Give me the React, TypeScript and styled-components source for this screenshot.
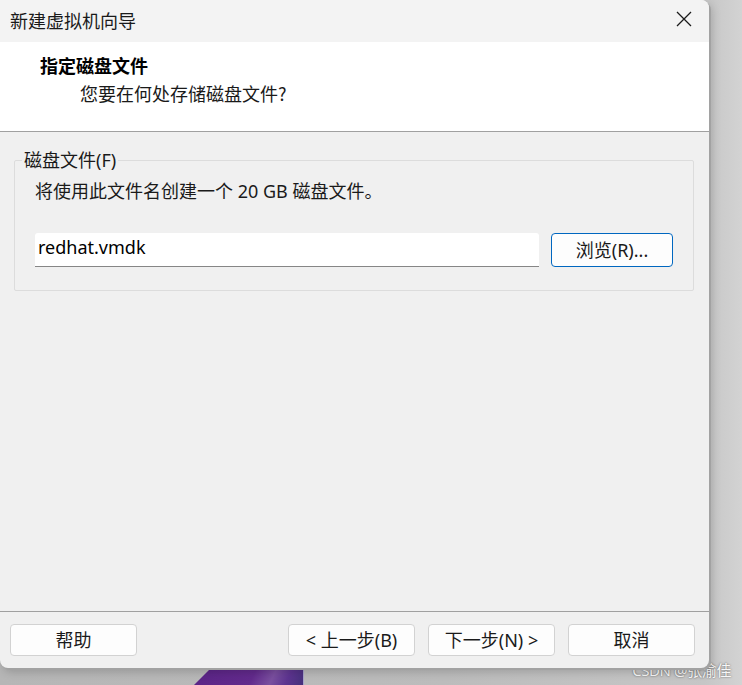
import React from "react";
import styled, { createGlobalStyle } from "styled-components";

const GlobalStyle = createGlobalStyle`
  html, body {
    margin: 0;
    padding: 0;
  }
  body {
    font-family: "Noto Sans", "Noto Sans CJK SC", sans-serif;
    background: #c2c2c2;
  }
`;

const Desktop = styled.div`
  position: relative;
  width: 742px;
  height: 685px;
  overflow: hidden;
  background: linear-gradient(90deg, #b6b6b6 0%, #bcbcbc 60%, #c6c6c6 95%, #d3d3d3 100%);
`;

const Wallpaper = styled.div`
  position: absolute;
  left: 194px;
  top: 660px;
  width: 109px;
  height: 25px;
  background: linear-gradient(115deg, #5a2486 0%, #622a8c 55%, #7a4f9f 72%, #5d3490 85%, #44307a 100%);
  border-right: 1px solid #a7a3c8;
  clip-path: polygon(25px 0, 100% 0, 100% 100%, 0 100%);
`;

const Watermark = styled.div`
  position: absolute;
  right: 11px;
  bottom: 5px;
  font-family: "Noto Sans", "Noto Sans CJK SC", sans-serif;
  font-size: 15px;
  color: rgba(255, 255, 255, 0.95);
  text-shadow: 0 0 2px rgba(70, 70, 70, 0.9);
  letter-spacing: -0.4px;
`;

const Window = styled.div`
  position: relative;
  z-index: 1;
  width: 709px;
  height: 668px;
  display: flex;
  flex-direction: column;
  background: #f0f0f0;
  border-radius: 0 8px 8px 8px;
  overflow: hidden;
  box-shadow: 2px 2px 0 #a2a2a2, 3px 4px 10px rgba(0, 0, 0, 0.18);
`;

const TitleBar = styled.div`
  height: 42px;
  flex: none;
  display: flex;
  align-items: center;
  justify-content: space-between;
  padding: 0 16px 0 10px;
  background: #f3f3f3;
`;

const TitleText = styled.span`
  font-family: "Noto Sans CJK SC", sans-serif;
  font-size: 18px;
  color: #1a1a1a;
  line-height: 1;
  margin-top: -3px;
`;

const CloseButton = styled.div`
  width: 18px;
  height: 18px;
  display: flex;
  align-items: center;
  justify-content: center;
  margin-top: -4px;
`;

const Header = styled.div`
  height: 90px;
  flex: none;
  background: #ffffff;
  border-bottom: 1px solid #a0a0a0;
  padding: 11px 0 0 40px;
  box-sizing: border-box;
`;

const HeaderTitle = styled.div`
  font-family: "Noto Sans CJK SC", sans-serif;
  font-size: 18px;
  font-weight: 700;
  color: #000;
  line-height: 24px;
`;

const HeaderSub = styled.div`
  font-family: "Noto Sans CJK SC", sans-serif;
  font-size: 18px;
  color: #1a1a1a;
  line-height: 24px;
  margin: 4px 0 0 40px;
`;

const Body = styled.div`
  flex: 1;
  padding: 17px 15px 0 14px;
`;

const GroupBox = styled.fieldset`
  margin: 0;
  padding: 8px 20px 23px 20px;
  border: 1px solid #dcdcdc;
  border-radius: 2px;
`;

const GroupLegend = styled.legend`
  margin-left: -13px;
  padding: 0 2px;
  font-size: 18px;
  line-height: 22px;
  color: #1a1a1a;
`;

const Description = styled.div`
  font-size: 18px;
  line-height: 24px;
  color: #1a1a1a;
`;

const FileRow = styled.div`
  display: flex;
  gap: 12px;
  margin-top: 30px;
`;

const PathField = styled.div`
  flex: 1;
  height: 34px;
  box-sizing: border-box;
  padding: 2px 3px 0;
  background: #ffffff;
  border-bottom: 1px solid #868686;
  border-radius: 3px 3px 0 0;
  font-size: 18px;
  line-height: 24px;
  color: #000;
`;

const Button = styled.div<{ $primary?: boolean }>`
  width: 127px;
  height: 32px;
  box-sizing: border-box;
  display: flex;
  align-items: center;
  justify-content: center;
  background: #fdfdfd;
  border: 1px solid ${(p) => (p.$primary ? "#0067c0" : "#d2d2d2")};
  border-radius: 4px;
  font-size: 18px;
  color: #1a1a1a;
  line-height: 1;
`;

const BrowseButton = styled(Button)`
  width: 122px;
  height: 34px;
`;

const Footer = styled.div`
  flex: none;
  display: flex;
  align-items: center;
  height: 57px;
  box-sizing: border-box;
  padding: 0 14px 0 10px;
  border-top: 1px solid #a0a0a0;
`;

const Spacer = styled.div`
  flex: 1;
`;

const NavGroup = styled.div`
  display: flex;
  gap: 13px;
`;

export default function App() {
  return (
    <>
      <GlobalStyle />
      <Desktop>
        <Wallpaper />
        <Window>
          <TitleBar>
            <TitleText>新建虚拟机向导</TitleText>
            <CloseButton>
              <svg width="16" height="16" viewBox="0 0 16 16">
                <path d="M1 1 L15 15 M15 1 L1 15" stroke="#1a1a1a" strokeWidth="1.3" fill="none" />
              </svg>
            </CloseButton>
          </TitleBar>
          <Header>
            <HeaderTitle>指定磁盘文件</HeaderTitle>
            <HeaderSub>您要在何处存储磁盘文件?</HeaderSub>
          </Header>
          <Body>
            <GroupBox>
              <GroupLegend>磁盘文件(F)</GroupLegend>
              <Description>将使用此文件名创建一个 20 GB 磁盘文件。</Description>
              <FileRow>
                <PathField>redhat.vmdk</PathField>
                <BrowseButton $primary>浏览(R)...</BrowseButton>
              </FileRow>
            </GroupBox>
          </Body>
          <Footer>
            <Button>帮助</Button>
            <Spacer />
            <NavGroup>
              <Button>&lt; 上一步(B)</Button>
              <Button>下一步(N) &gt;</Button>
              <Button>取消</Button>
            </NavGroup>
          </Footer>
        </Window>
        <Watermark>CSDN @张渝佳</Watermark>
      </Desktop>
    </>
  );
}
